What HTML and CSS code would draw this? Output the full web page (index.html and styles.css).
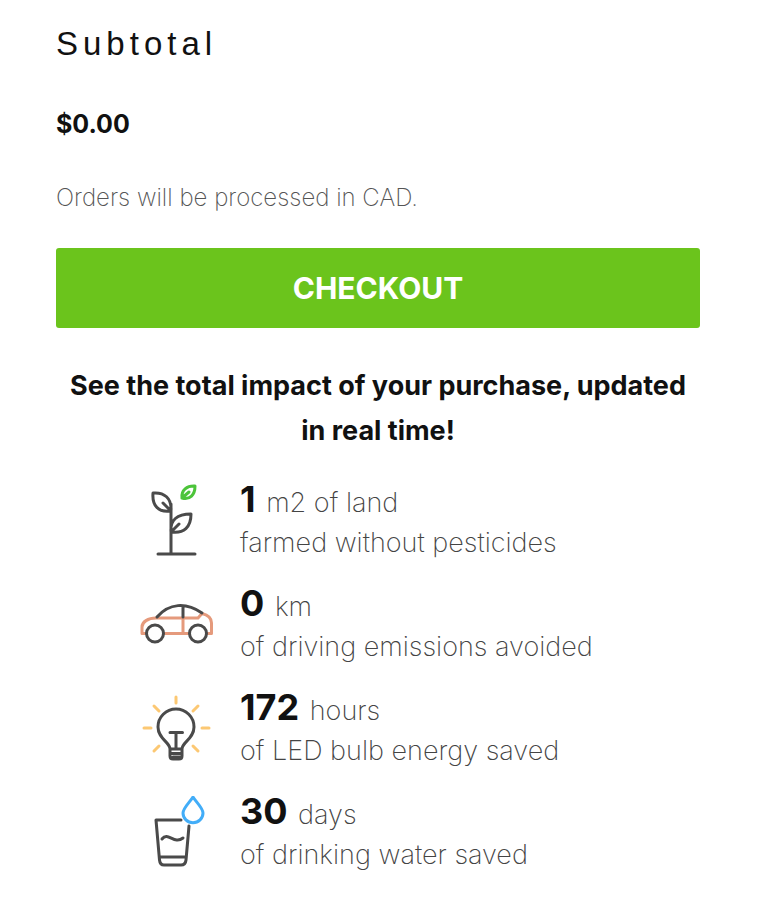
FILE: index.html
```html
<!DOCTYPE html>
<html lang="en">
<head>
    <meta charset="UTF-8">
    <meta name="viewport" content="width=device-width, initial-scale=1.0">
    <title>Cart</title>
    <link rel="stylesheet" href="styles.css">
</head>
<body>
    <main class="cart-summary">
        <h2 class="subtotal-title">Subtotal</h2>
        <p class="subtotal-price">$0.00</p>
        <p class="currency-note">Orders will be processed in CAD.</p>
        <button class="checkout" type="button">CHECKOUT</button>

        <h3 class="impact-title">See the total impact of your purchase, updated in real time!</h3>
        <ul class="impact-list">
            <li class="impact">
                <svg class="icon" viewBox="0 0 76 76" aria-hidden="true">
                    <path d="M20 70H57M33 70V20M33 27C20 29 14 21 15 9C26 8 34 14 33 27L25 19M33 48C32 36 39 30 53 30C53 43 46 50 33 48L41 40"/>
                    <path class="green" d="M44 14C43 6 49 1.500 57 2C57 11 52 16 44 14L51 8"/>
                </svg>
                <p class="impact-text"><strong>1</strong> m2 of land<br>farmed without pesticides</p>
            </li>
            <li class="impact">
                <svg class="icon" viewBox="0 0 76 76" aria-hidden="true">
                    <path class="orange" d="M8 45.500H4V39C4 34 10 30 18 30H60L64 25.500C70 27 73.500 30 73.500 35V45.500H69M26 45.500H51M45 30V45"/>
                    <path d="M19 29C31 15 48 14 64 25M45 19V29"/>
                    <circle cx="17" cy="45.5" r="8.500"/>
                    <circle cx="60" cy="45.5" r="8.500"/>
                </svg>
                <p class="impact-text"><strong>0</strong> km<br>of driving emissions avoided</p>
            </li>
            <li class="impact">
                <svg class="icon" viewBox="0 0 76 76" aria-hidden="true">
                    <path d="M32 57C32 50 20 47 20 35A18 18 0 0 1 56 35C56 47 44 50 44 57ZM32 40.500H44.500M38 41V57M32 57V64Q32 67 35 67H41Q44 67 44 64V57M32 61.500H44M35 65H42"/>
                    <path class="yellow" d="M38 5V11M6 36H13M64 36H71M16 14L21 19M60 14L55 19M16 59L21 54M60 59L55 54"/>
                </svg>
                <p class="impact-text"><strong>172</strong> hours<br>of LED bulb energy saved</p>
            </li>
            <li class="impact">
                <svg class="icon" viewBox="0 0 76 76" aria-hidden="true">
                    <path d="M43 24H18L21.500 64Q22 69 26 69H43Q47.500 69 48 64L51 30M21.500 61H48M24 43C30 35 36 49 45 42"/>
                    <path class="blue" d="M55 1C52 6 45 12 45 17A9.800 9.500 0 0 0 65 17C65 12 58 6 55 1Z"/>
                </svg>
                <p class="impact-text"><strong>30</strong> days<br>of drinking water saved</p>
            </li>
        </ul>
    </main>
</body>
</html>
```
FILE: styles.css
```css
* {
    box-sizing: border-box;
}
body {
    margin: 0;
    font-family: Inter, sans-serif;
    color: #111;
    background-color: #fff;
}
h2, h3, p, ul {
    margin: 0;
    padding: 0;
}
.cart-summary {
    padding: 24px 80px 24px 56px;
}
.subtotal-title {
    font-family: "Liberation Sans", Arial, sans-serif;
    font-size: 33px;
    font-weight: 400;
    line-height: 40px;
    letter-spacing: 5px;
    margin-bottom: 40px;
}
.subtotal-price {
    font-size: 25px;
    font-weight: 700;
    line-height: 40px;
    margin-bottom: 34px;
}
.currency-note {
    font-size: 24px;
    font-weight: 200;
    line-height: 40px;
    color: #555;
    margin-bottom: 30px;
}
.checkout {
    display: block;
    width: 100%;
    padding: 20px;
    font-family: inherit;
    font-size: 30px;
    font-weight: 700;
    line-height: 40px;
    color: #fff;
    background-color: #6bc41c;
    border: none;
    border-radius: 3px;
    cursor: pointer;
}
.impact-title {
    font-size: 27px;
    font-weight: 700;
    line-height: 45px;
    text-align: center;
    padding: 0 8px;
    margin: 35px 0 28px;
}
.impact-list {
    display: flex;
    flex-direction: column;
    gap: 22px;
    padding-left: 82px;
    list-style: none;
}
.impact {
    display: flex;
    align-items: center;
    gap: 26px;
}
.impact-text {
    font-size: 27px;
    font-weight: 200;
    line-height: 40px;
    color: #444;
}
.impact-text strong {
    font-size: 36px;
    font-weight: 700;
    line-height: 1;
    color: #111;
    margin-right: 3px;
}
.icon {
    flex: none;
    width: 76px;
    height: 76px;
    fill: none;
    stroke: #4a4a4a;
    stroke-width: 3;
    stroke-linecap: round;
    stroke-linejoin: round;
}
.icon .green {
    stroke: #4cc43a;
}
.icon .orange {
    stroke: #e59a7c;
}
.icon .yellow {
    stroke: #fcc873;
}
.icon .blue {
    stroke: #42adf8;
}
```
